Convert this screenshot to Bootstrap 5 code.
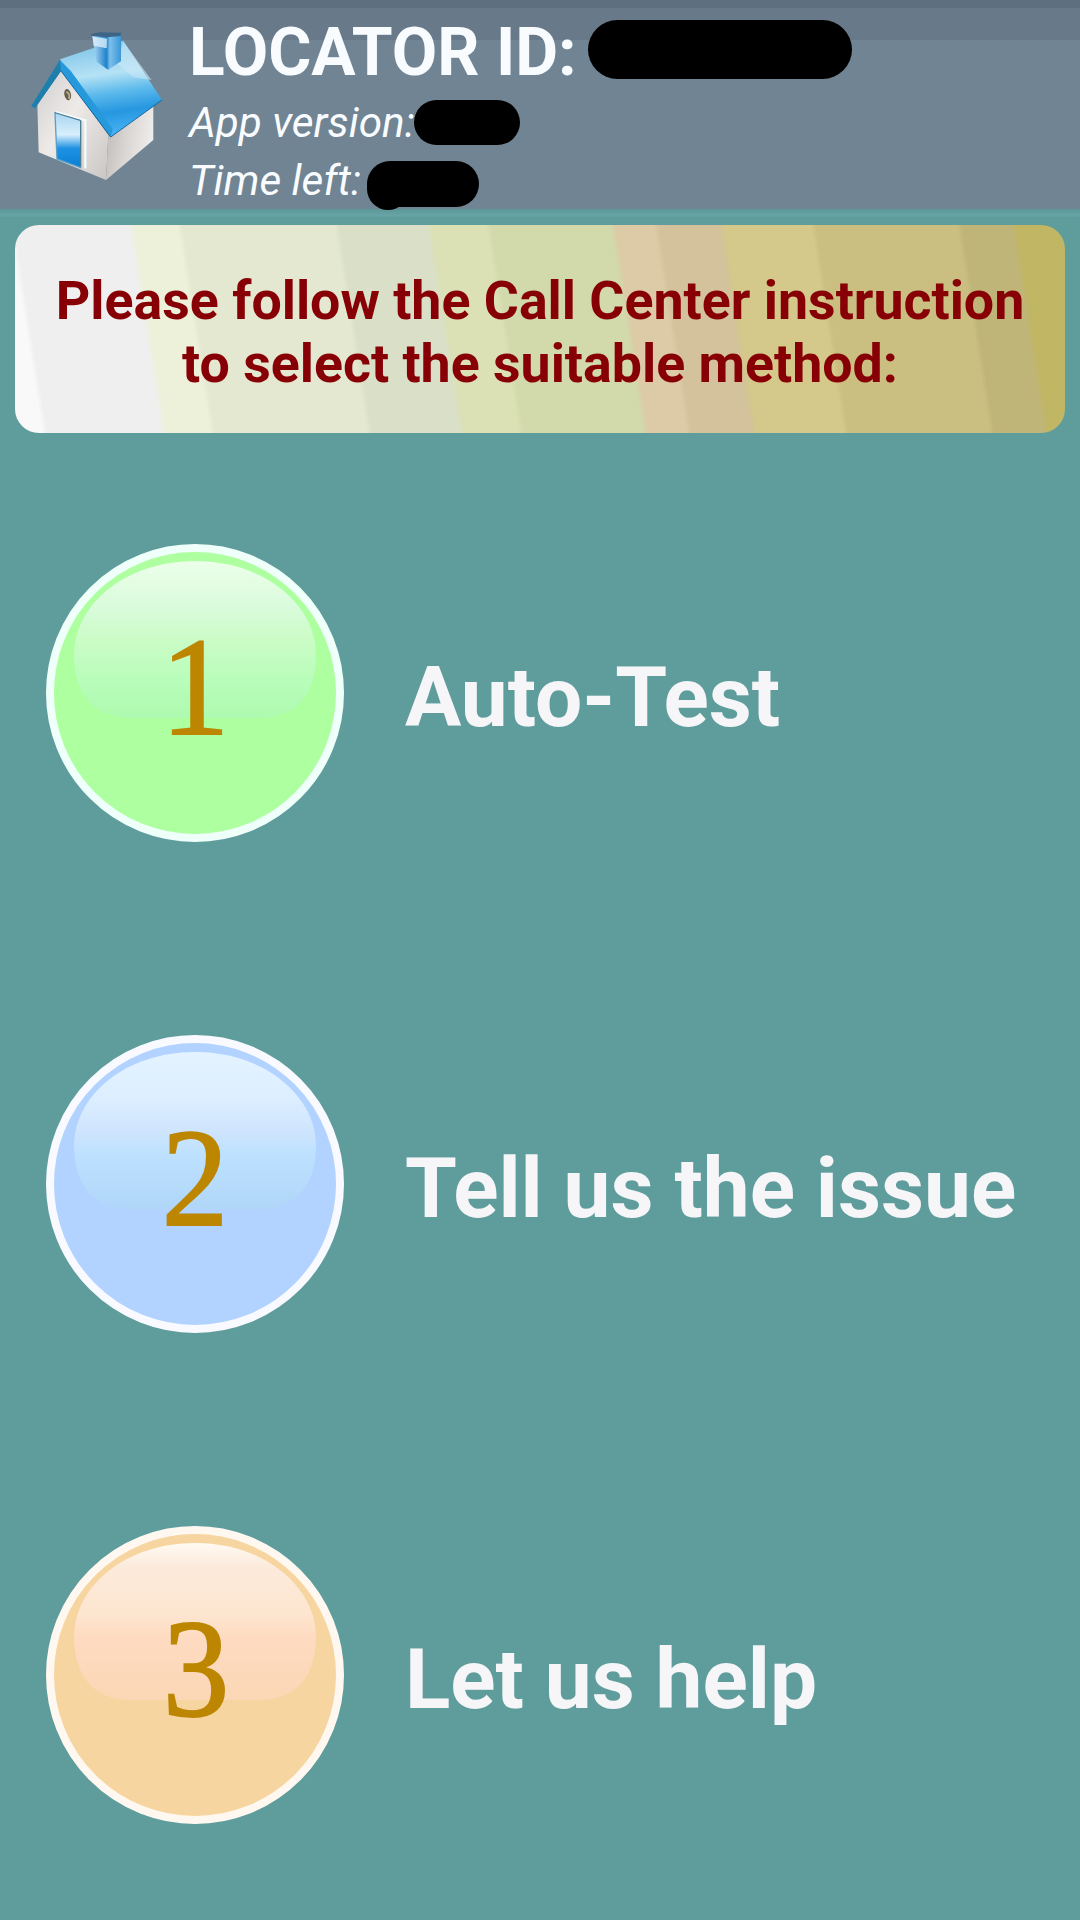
<!DOCTYPE html>
<html lang="en">
<head>
<meta charset="utf-8">
<meta name="viewport" content="width=device-width, initial-scale=1">
<title>Locator</title>
<link href="https://cdn.jsdelivr.net/npm/bootstrap@5.3.0/dist/css/bootstrap.min.css" rel="stylesheet">
<style>
body{background:#5f9d9d;font-family:Roboto,sans-serif;height:1920px;overflow:hidden}
.topbar{height:209px;background:linear-gradient(#5e7080 0 8px,#687a8a 8px 40px,#718493 40px);color:#f9fcff}
.seam{height:16px;background:linear-gradient(#5c9798 0,#68a5a6 7px,#5f9d9d 8px)}
.house{width:160px;height:200px;margin-left:20px}
.info{padding:12px 0 0 9px}
.loc{font-size:66px;line-height:76px;height:81px}
.loc>span:first-child{padding-top:1px}
.loc .pill{margin-bottom:6px}
.sub{font-size:42.3px;line-height:58px;height:58px;font-style:italic}
.sub>span:first-child{padding-top:1px}
.pill{background:#000}
.p1{width:264px;height:59px;border-radius:30px;margin-left:11px}
.p2{width:106px;height:45px;border-radius:23px;margin-left:-1px}
.p3{width:112px;height:46px;border-radius:23px;margin:8px 0 0 6px;position:relative}
.p3::after{content:"";position:absolute;left:0;top:6px;width:42px;height:43px;background:#000;border-radius:21px}
.banner{margin:0 15px;height:208px;padding-top:6px;border-radius:24px;background:linear-gradient(81deg,#f9f9f9 0 2.5%,#efefef 3% 13.5%,#edf1da 14% 18%,#e4e8d0 18.5% 32.5%,#dadfc7 33% 41%,#dbe1b5 41.5% 46.5%,#d2d9ab 47% 58%,#dccba6 58.5% 62%,#d3c29c 62.5% 68%,#d4c88a 68.5% 76.5%,#cabf81 77% 90%,#c0b578 90.5% 95%,#c1b663 95.5%);color:#870006;font-size:53.7px;line-height:63px}
.choices{padding-top:110px}
.choice{height:300px;margin-bottom:191px;padding-left:45px;gap:60px}
.orb{width:300px;height:300px}
.orb text{font-family:"Liberation Serif",serif;font-size:140px;fill:#bd8600;stroke:#bd8600;stroke-width:2}
.choice .cap{font-size:83.8px;line-height:100px;padding-top:7px;color:#f6f6f9}
</style>
<script src="https://cdn.jsdelivr.net/npm/bootstrap@5.3.0/dist/js/bootstrap.bundle.min.js"></script>
</head>
<body>
<svg width="0" height="0" class="position-absolute" aria-hidden="true">
<defs>
<linearGradient id="g1" x1="0" y1="0" x2="0" y2="1"><stop offset="0" stop-color="#ecffe9"/><stop offset=".3" stop-color="#d9fbdc"/><stop offset=".5" stop-color="#cbfcc6"/><stop offset=".75" stop-color="#b9fdbb"/><stop offset="1" stop-color="#aefab0"/></linearGradient>
<linearGradient id="g2" x1="0" y1="0" x2="0" y2="1"><stop offset="0" stop-color="#e4f3ff"/><stop offset=".3" stop-color="#dceeff"/><stop offset=".5" stop-color="#cfe5fd"/><stop offset=".65" stop-color="#bde1ff"/><stop offset="1" stop-color="#b0d6f8"/></linearGradient>
<linearGradient id="g3" x1="0" y1="0" x2="0" y2="1"><stop offset="0" stop-color="#fffaf2"/><stop offset=".15" stop-color="#fceadb"/><stop offset=".45" stop-color="#fde6d0"/><stop offset=".6" stop-color="#fedbc1"/><stop offset="1" stop-color="#fbd7b5"/></linearGradient>
<path id="shine" d="M29 112C29 62 80 18 150 18S271 62 271 112C271 157 245 175 215 175H85C55 175 29 157 29 112Z"/>
</defs>
</svg>
<header class="topbar d-flex">
<svg class="house flex-shrink-0" viewBox="60 0 480 600" role="img" aria-label="Home">
<defs>
<linearGradient id="roof" x1=".35" y1="0" x2=".5" y2="1"><stop offset="0" stop-color="#7cc3e8"/><stop offset=".35" stop-color="#b5e2f5"/><stop offset=".55" stop-color="#5cbaec"/><stop offset=".75" stop-color="#2697e0"/><stop offset="1" stop-color="#4ab5f5"/></linearGradient>
<linearGradient id="front" x1="0" y1="0" x2="1" y2="1"><stop offset="0" stop-color="#cfcfcf"/><stop offset=".45" stop-color="#eeeae8"/><stop offset="1" stop-color="#c9c6c4"/></linearGradient>
<linearGradient id="side" x1="0" y1="0" x2="1" y2=".3"><stop offset="0" stop-color="#b9b6b5"/><stop offset=".5" stop-color="#d8d4d2"/><stop offset="1" stop-color="#eeecea"/></linearGradient>
<linearGradient id="door" x1="0" y1="0" x2="0" y2="1"><stop offset="0" stop-color="#a9d4f0"/><stop offset=".4" stop-color="#d8effc"/><stop offset=".65" stop-color="#1e91e2"/><stop offset="1" stop-color="#0a80d4"/></linearGradient>
<linearGradient id="stack" x1="0" y1="0" x2="1" y2="0"><stop offset="0" stop-color="#b9ddf5"/><stop offset=".5" stop-color="#1f83cc"/><stop offset=".62" stop-color="#7cc0eb"/><stop offset="1" stop-color="#3a96d6"/></linearGradient>
</defs>
<path d="M112 310L180 205L325 405L318 540L116 457Z" fill="url(#front)"/>
<path d="M325 405L460 312V420L318 540Z" fill="url(#side)"/>
<path d="M165 338L242 361V503L171 477Z" fill="url(#door)" stroke="#5a9fc9" stroke-width="4"/>
<path d="M168 336L256 361V505" fill="none" stroke="#f4fbfb" stroke-width="7"/>
<path d="M165 338L242 361V500" fill="none" stroke="#47788e" stroke-width="3"/>
<ellipse cx="203" cy="284" rx="10" ry="17" transform="rotate(-12 203 284)" fill="#69604a"/>
<path d="M199 275Q211 280 207 297" fill="none" stroke="#bdb297" stroke-width="5"/>
<path d="M180 178L278 145L370 122L486 300L332 411L205 232Z" fill="url(#roof)"/>
<path d="M370 125L455 240L400 232L350 190Z" fill="#cdeaf6" opacity=".55"/>
<path d="M180 180L213 214L338 386L332 411L183 213L105 325L94 318Z" fill="#2699dd"/>
<path d="M180 180L94 318L105 325L183 213Z" fill="#207eaa"/>
<path d="M183 213L332 411L486 300" fill="none" stroke="#17689e" stroke-width="3"/>
<path d="M276 105L290 185L324 209L363 184L363 104Z" fill="url(#stack)"/>
<path d="M272 102L300 97L364 98L362 108L321 112L276 108Z" fill="#3d6686"/>
<path d="M278 110L321 116L320 145L281 137Z" fill="#dceffa" opacity=".8"/>
</svg>
<div class="info">
<div class="loc fw-bold d-flex align-items-center"><span>LOCATOR ID:</span><span class="pill p1"></span></div>
<div class="sub d-flex align-items-center"><span>App version:</span><span class="pill p2"></span></div>
<div class="sub d-flex align-items-center"><span>Time left:</span><span class="pill p3"></span></div>
</div>
</header>
<div class="seam"></div>
<section class="banner fw-bold d-flex flex-column justify-content-center align-items-center"><span>Please follow the Call Center instruction</span><span>to select the suitable method:</span></section>
<main class="choices">
<div class="choice d-flex align-items-center"><svg class="orb"><circle cx="150" cy="150" r="145" fill="#adffa0" stroke="#effffa" stroke-width="8"/><use href="#shine" fill="url(#g1)"/><text transform="translate(150 191) scale(.98 1)" text-anchor="middle">1</text></svg><span class="cap fw-bold">Auto-Test</span></div>
<div class="choice d-flex align-items-center"><svg class="orb"><circle cx="150" cy="150" r="145" fill="#b2d3ff" stroke="#f8faff" stroke-width="8"/><use href="#shine" fill="url(#g2)"/><text transform="translate(150 191) scale(.95 1)" text-anchor="middle">2</text></svg><span class="cap fw-bold">Tell us the issue</span></div>
<div class="choice d-flex align-items-center"><svg class="orb"><circle cx="150" cy="150" r="145" fill="#f7d5a0" stroke="#fff8f0" stroke-width="8"/><use href="#shine" fill="url(#g3)"/><text transform="translate(151 191) scale(.95 1)" text-anchor="middle">3</text></svg><span class="cap fw-bold">Let us help</span></div>
</main>
</body></html>
